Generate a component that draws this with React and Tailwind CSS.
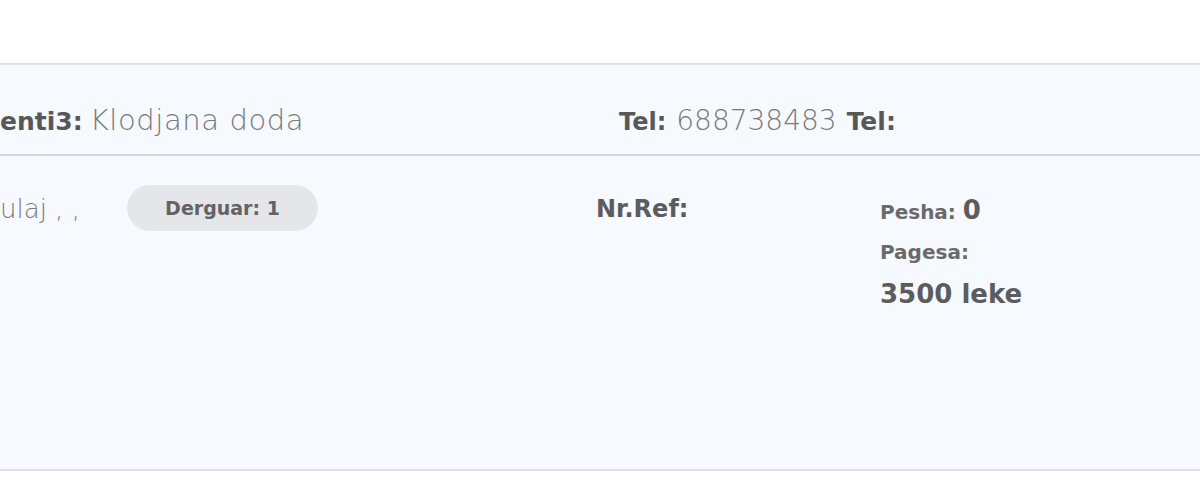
const font = { fontFamily: '"DejaVu Sans", "Liberation Sans", sans-serif' };

const App = () => {
  return (
    <div className="w-[1200px] h-[500px] bg-white overflow-hidden" style={font}>
      <div className="mt-[63px] h-[408px] bg-[#f6f9fe] border-t-2 border-b-2 border-[#dfe1e4] flex flex-col">
        <div className="h-[91px] border-b-2 border-[#d6d7d9] flex items-center pt-[22px] leading-none text-[#585858]">
          <div className="w-[619px] shrink-0 whitespace-nowrap flex items-baseline">
            <span className="font-bold text-[25px]">enti3:</span>
            <span className="ml-[7px] font-extralight text-[29px] tracking-[0.6px] text-[#7a7a7a]">Klodjana doda</span>
          </div>
          <div className="whitespace-nowrap flex items-baseline">
            <span className="font-bold text-[24px]">Tel:</span>
            <span className="ml-[10px] font-extralight text-[28px] text-[#7a7a7a]">688738483</span>
            <span className="ml-[10px] font-bold text-[25px]">Tel:</span>
          </div>
        </div>
        <div className="flex items-start pt-[29px]">
          <div className="w-[127px] shrink-0 text-[26px] font-extralight text-[#7a7a7a] whitespace-nowrap leading-[48px]">
            ulaj , ,
          </div>
          <div className="w-[469px] shrink-0">
            <span className="inline-flex items-center justify-center w-[191px] h-[46px] rounded-full bg-[#e4e6ea] text-[19px] font-bold text-[#636363]">
              Derguar: 1
            </span>
          </div>
          <div className="w-[284px] shrink-0 pt-[12px] text-[24px] font-bold text-[#5c5c5c] leading-none">
            Nr.Ref:
          </div>
          <div className="flex flex-col text-[#6a6a6a] pt-[12px]">
            <div className="flex items-baseline leading-none">
              <span className="text-[20px] font-bold">Pesha:</span>
              <span className="ml-[7px] text-[26px] font-bold text-[#5c5c5c]">0</span>
            </div>
            <div className="mt-[19px] text-[20px] font-bold leading-none">Pagesa:</div>
            <div className="mt-[19px] text-[26px] font-bold text-[#5c5c5c] leading-none">3500 leke</div>
          </div>
        </div>
      </div>
    </div>
  );
};

export default App;
